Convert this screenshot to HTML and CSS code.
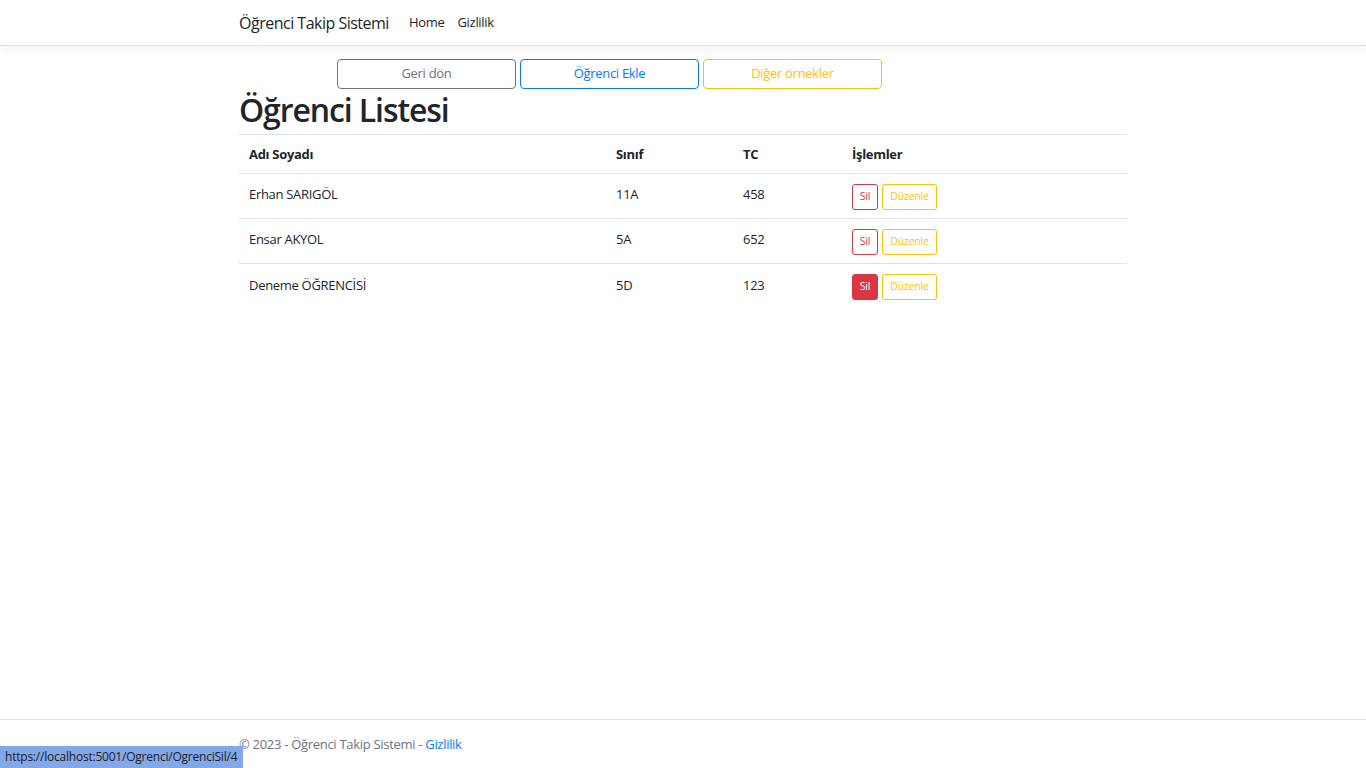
FILE: index.html
```html
<!DOCTYPE html>
<html lang="tr">
<head>
<meta charset="utf-8">
<title>Öğrenci Listesi - Öğrenci Takip Sistemi</title>
<link rel="stylesheet" href="styles.css">
</head>
<body>
<header class="navbar">
  <div class="container nav-inner">
    <a class="brand" href="#">Öğrenci Takip Sistemi</a>
    <nav class="nav-links">
      <a href="#">Home</a>
      <a href="#">Gizlilik</a>
    </nav>
  </div>
</header>
<main class="container main">
  <div class="actions">
    <a class="btn btn-outline-secondary" href="#">Geri dön</a>
    <a class="btn btn-outline-primary" href="#">Öğrenci Ekle</a>
    <a class="btn btn-outline-warning" href="#">Diğer örnekler</a>
  </div>
  <h1 class="title">Öğrenci Listesi</h1>
  <table class="table">
    <thead>
      <tr>
        <th class="c-name">Adı Soyadı</th>
        <th class="c-class">Sınıf</th>
        <th class="c-tc">TC</th>
        <th class="c-ops">İşlemler</th>
      </tr>
    </thead>
    <tbody>
      <tr>
        <td>Erhan SARIGÖL</td>
        <td>11A</td>
        <td>458</td>
        <td><div class="ops"><a class="sm sm-danger" href="#">Sil</a><a class="sm sm-warning" href="#">Düzenle</a></div></td>
      </tr>
      <tr>
        <td>Ensar AKYOL</td>
        <td>5A</td>
        <td>652</td>
        <td><div class="ops"><a class="sm sm-danger" href="#">Sil</a><a class="sm sm-warning" href="#">Düzenle</a></div></td>
      </tr>
      <tr>
        <td>Deneme ÖĞRENCİSİ</td>
        <td>5D</td>
        <td>123</td>
        <td><div class="ops"><a class="sm sm-danger hover" href="#">Sil</a><a class="sm sm-warning" href="#">Düzenle</a></div></td>
      </tr>
    </tbody>
  </table>
</main>
<footer class="footer">
  <div class="container">© 2023 - Öğrenci Takip Sistemi - <a href="#">Gizlilik</a></div>
</footer>
<div class="status">https://localhost:5001/Ogrenci/OgrenciSil/4</div>
</body>
</html>
```
FILE: styles.css
```css
* { box-sizing: border-box; }
html, body { height: 100%; }
body {
  margin: 0;
  font-family: "Open Sans", "Noto Sans", sans-serif;
  font-size: 13px;
  letter-spacing: -0.3px;
  line-height: 1.5;
  color: #212529;
  background: #fff;
  position: relative;
  overflow: hidden;
}
a { text-decoration: none; }
.container { width: 888px; margin: 0 auto; }

.navbar {
  height: 46px;
  border-bottom: 1px solid #dee2e6;
  box-shadow: 0 4px 10px rgba(0,0,0,.05);
  background: #fff;
}
.nav-inner { display: flex; align-items: center; height: 45px; }
.brand { font-size: 16px; letter-spacing: -0.5px; color: #212529; margin-right: 20px; }
.nav-links { display: flex; gap: 13px; }
.nav-links a { color: #212529; font-size: 13px; }

.main { padding-top: 13px; }
.actions { display: flex; gap: 4px; padding-left: 98px; }
.btn {
  width: 179px; height: 30px;
  display: flex; align-items: center; justify-content: center;
  border: 1px solid; border-radius: 4px;
  font-size: 13px;
}
.btn-outline-secondary { color: #6c757d; border-color: #6c757d; }
.btn-outline-primary { color: #007bff; border-color: #007bff; }
.btn-outline-warning { color: #ffc107; border-color: #ffc107; }

.title {
  font-size: 32px; font-weight: 600; letter-spacing: -1.1px;
  margin: 0; line-height: 42px; padding-bottom: 3px; color: #212529;
}

.table { width: 100%; border-collapse: collapse; }
.table th, .table td {
  text-align: left; padding: 0 10px;
  border-top: 1px solid #dee2e6;
  vertical-align: middle;
}
.table th { height: 39px; font-weight: 700; border-bottom: 1px solid #dee2e6; padding-top: 1px; }
.table thead + tbody tr:first-child td { border-top: 0; }
.table td { height: 45px; padding-bottom: 2px; }
.table tbody tr:last-child td { height: 46px; }
.c-name { width: 367px; }
.c-class { width: 127px; }
.c-tc { width: 109px; }
.ops { display: flex; gap: 4px; padding-top: 3px; }
.sm {
  height: 26px; display: flex; align-items: center; justify-content: center;
  border: 1px solid; border-radius: 3px; font-size: 10.5px; letter-spacing: -0.2px;
}
.sm-danger { color: #dc3545; border-color: #dc3545; width: 26px; }
.sm-danger.hover { background: #dc3545; color: #fff; }
.sm-warning { color: #ffc107; border-color: #ffc107; width: 55px; }

.footer {
  position: absolute; left: 0; right: 0; bottom: 0;
  height: 49px; line-height: 49px;
  border-top: 1px solid #dee2e6;
  color: #6c757d; font-size: 13px; white-space: nowrap;
}
.footer a { color: #007bff; }
.status {
  position: absolute; left: 0; bottom: 0;
  width: 243px; height: 22px; line-height: 22px;
  background: #82a8e8; color: #1c1c28;
  font-size: 12px; letter-spacing: -0.22px; padding-left: 5px;
  white-space: nowrap; overflow: hidden;
}
```
